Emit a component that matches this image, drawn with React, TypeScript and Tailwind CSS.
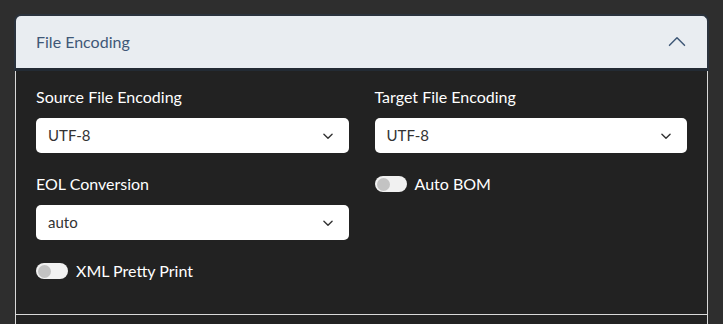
import React from "react";

const font = { fontFamily: "Lato, 'Noto Sans', sans-serif" };

function ChevronDown() {
  return (
    <svg width="14" height="14" viewBox="0 0 24 24" fill="none" stroke="#333" strokeWidth="2.4" strokeLinecap="round" strokeLinejoin="round">
      <path d="M5 9l7 7 7-7" />
    </svg>
  );
}

function Select({ value }: { value: string }) {
  return (
    <div className="flex h-[35px] items-center justify-between rounded-[5px] bg-white pl-[12px] pr-[14px] text-[15px] text-[#333]">
      <span>{value}</span>
      <ChevronDown />
    </div>
  );
}

function Field({ label, value }: { label: string; value: string }) {
  return (
    <div className="flex flex-col">
      <div className="mb-[10px] h-[22px] text-[16px] leading-[22px] text-white">{label}</div>
      <Select value={value} />
    </div>
  );
}

function Toggle({ label }: { label: string }) {
  return (
    <div className="flex h-[22px] items-center gap-[8px]">
      <div className="flex h-[16px] w-[32px] items-center rounded-full bg-[#f1f1f1] pl-[2px]">
        <div className="h-[13px] w-[13px] rounded-full bg-[#c3c3c3]" />
      </div>
      <span className="text-[16px] leading-[22px] text-white">{label}</span>
    </div>
  );
}

export default function App() {
  return (
    <div className="h-[324px] w-[723px] overflow-hidden bg-[#2e2e2e] pt-[14px]" style={font}>
      <div className="mx-[14px] w-[695px]">
        <div className="flex h-[57px] items-center justify-between rounded-t-[7px] border-x-2 border-t-2 border-b-[3px] border-x-[#2b333d] border-t-[#2b333d] border-b-[#232b34] bg-[#e9edf1] pl-[20px] pr-[20px]">
          <span className="text-[16px] text-[#3f5877]">File Encoding</span>
          <svg width="20" height="20" viewBox="0 0 24 24" fill="none" stroke="#3f5877" strokeWidth="1.8" strokeLinecap="round" strokeLinejoin="round">
            <path d="M3 16l9-9 9 9" />
          </svg>
        </div>
        <div className="mx-[1px] border-x border-b border-[#d9d9d9] bg-[#222222] px-[20px] pb-[32px] pt-[15px]">
          <div className="grid grid-cols-2 items-start gap-x-[26px] gap-y-[20px]">
            <Field label="Source File Encoding" value="UTF-8" />
            <Field label="Target File Encoding" value="UTF-8" />
            <Field label="EOL Conversion" value="auto" />
            <Toggle label="Auto BOM" />
            <Toggle label="XML Pretty Print" />
          </div>
        </div>
        <div className="mx-[1px] h-[40px] border-x border-[#d9d9d9] bg-[#222222]" />
      </div>
    </div>
  );
}
